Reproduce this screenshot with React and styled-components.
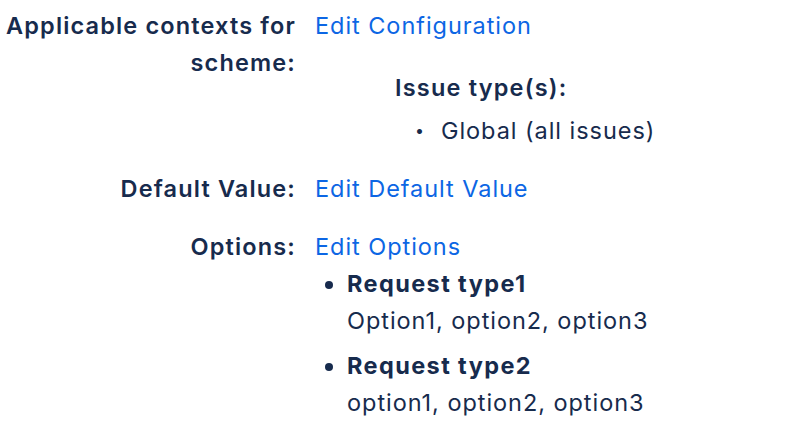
import React from "react";
import styled, { createGlobalStyle } from "styled-components";

const GlobalStyle = createGlobalStyle`
  body {
    margin: 0;
    background: #ffffff;
    font-family: Inter, "Noto Sans", "Liberation Sans", sans-serif;
    color: #172b4d;
  }
`;

const Page = styled.div`
  padding: 7px 0 0 0;
  width: 800px;
  height: 440px;
  box-sizing: border-box;
`;

// two column grid: right aligned labels, values on the right
const FieldGrid = styled.dl`
  display: grid;
  grid-template-columns: 296px 1fr;
  column-gap: 19px;
  row-gap: 21px;
  margin: 0;
  font-size: 23.5px;
  line-height: 37px;
  letter-spacing: 0.95px;
`;

const Label = styled.dt`
  font-weight: 600;
  text-align: right;
  margin: 0;
  letter-spacing: 1.15px;
`;

const Value = styled.dd`
  margin: 0;
`;

const Link = styled.a`
  color: #0c66e4;
  text-decoration: none;
  cursor: pointer;
`;

const SubHeading = styled.div`
  font-weight: 600;
  letter-spacing: 1.2px;
  margin: 25px 0 0 80px;
`;

const ContextList = styled.ul`
  list-style: none;
  margin: 6px 0 0 100px;
  padding: 0;
`;

const ContextItem = styled.li`
  display: flex;
  gap: 16px;

  &::before {
    content: "•";
    font-size: 16px;
  }
`;

const OptionList = styled.ul`
  margin: 0;
  padding: 0 0 0 32px;
  list-style: disc;
`;

const OptionItem = styled.li`
  & + & {
    margin-top: 8px;
  }
`;

const OptionTitle = styled.div`
  font-weight: 700;
  letter-spacing: 1.4px;
`;

const options = [
  { title: "Request type1", values: "Option1, option2, option3" },
  { title: "Request type2", values: "option1, option2, option3" }
];

const App = () => {
  return (
    <Page>
      <GlobalStyle />
      <FieldGrid>
        <Label>Applicable contexts for scheme:</Label>
        <Value>
          <Link>Edit Configuration</Link>
          <SubHeading>Issue type(s):</SubHeading>
          <ContextList>
            <ContextItem>Global (all issues)</ContextItem>
          </ContextList>
        </Value>

        <Label>Default Value:</Label>
        <Value>
          <Link>Edit Default Value</Link>
        </Value>

        <Label>Options:</Label>
        <Value>
          <Link>Edit Options</Link>
          <OptionList>
            {options.map(opt =>
              <OptionItem key={opt.title}>
                <OptionTitle>
                  {opt.title}
                </OptionTitle>
                <div>
                  {opt.values}
                </div>
              </OptionItem>
            )}
          </OptionList>
        </Value>
      </FieldGrid>
    </Page>
  );
};

export default App;
